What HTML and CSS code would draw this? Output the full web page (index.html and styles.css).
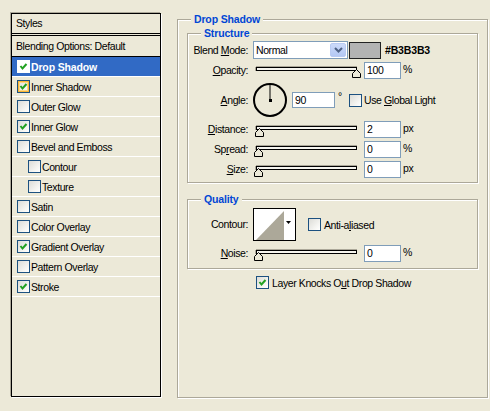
FILE: index.html
```html
<!DOCTYPE html>
<html>
<head>
<meta charset="utf-8">
<link rel="stylesheet" href="styles.css">
</head>
<body>
<div class="dialog">
  <div class="styles-list">
    <div class="list-head">Styles</div>
    <div class="list-body">
      <div class="row blend">Blending Options: Default</div>
      <div class="row sel"><span class="cb white"><svg viewBox="0 0 11 11" width="11" height="11"><polyline points="2.5,5 4.5,7.5 8.5,3" fill="none" stroke="#21A121" stroke-width="2"/></svg></span><b>Drop Shadow</b></div>
      <div class="row"><span class="cb hover"><svg viewBox="0 0 11 11" width="11" height="11"><polyline points="2.5,5 4.5,7.5 8.5,3" fill="none" stroke="#21A121" stroke-width="2"/></svg></span>Inner Shadow</div>
      <div class="row"><span class="cb"></span>Outer Glow</div>
      <div class="row"><span class="cb"><svg viewBox="0 0 11 11" width="11" height="11"><polyline points="2.5,5 4.5,7.5 8.5,3" fill="none" stroke="#21A121" stroke-width="2"/></svg></span>Inner Glow</div>
      <div class="row"><span class="cb"></span>Bevel and Emboss</div>
      <div class="row sub"><span class="cb"></span>Contour</div>
      <div class="row sub"><span class="cb"></span>Texture</div>
      <div class="row"><span class="cb"></span>Satin</div>
      <div class="row"><span class="cb"></span>Color Overlay</div>
      <div class="row"><span class="cb"><svg viewBox="0 0 11 11" width="11" height="11"><polyline points="2.5,5 4.5,7.5 8.5,3" fill="none" stroke="#21A121" stroke-width="2"/></svg></span>Gradient Overlay</div>
      <div class="row"><span class="cb"></span>Pattern Overlay</div>
      <div class="row"><span class="cb"><svg viewBox="0 0 11 11" width="11" height="11"><polyline points="2.5,5 4.5,7.5 8.5,3" fill="none" stroke="#21A121" stroke-width="2"/></svg></span>Stroke</div>
    </div>
  </div>

  <fieldset class="group outer">
    <legend class="legend-outer">Drop Shadow</legend>

    <fieldset class="group inner structure">
      <legend class="legend-inner">Structure</legend>
      <div class="form">
        <div class="label r18">Blend <u>M</u>ode:</div>
        <div class="ctrl r18">
          <div class="select"><span>Normal</span><span class="drop"><svg viewBox="0 0 9 6" width="9" height="6"><polyline points="1,1 4.5,4.5 8,1" fill="none" stroke="#4D6185" stroke-width="2"/></svg></span></div>
          <div class="swatch"></div>
          <b class="hex">#B3B3B3</b>
        </div>

        <div class="label"><u>O</u>pacity:</div>
        <div class="ctrl">
          <div class="slider"><div class="track"></div><svg class="thumb" style="left:99px" viewBox="0 0 10 9" width="10" height="9"><polygon points="0.5,8.5 0.5,4.5 4.5,0.5 8.5,4.5 8.5,8.5" fill="#ECE9D8" stroke="#000"/></svg></div>
          <div class="num">100</div><span class="unit">%</span>
        </div>

        <div class="label r36"><u>A</u>ngle:</div>
        <div class="ctrl r36">
          <svg class="dial" viewBox="0 0 34 36" width="34" height="36"><circle cx="17" cy="18" r="16" fill="none" stroke="#000" stroke-width="2"/><line x1="17" y1="18" x2="17" y2="2" stroke="#000" stroke-width="1"/><rect x="16" y="17" width="3" height="3" fill="#000"/></svg>
          <div class="num wide">90</div><span class="deg">°</span>
          <span class="cb"></span><span class="cb-label">Use <u>G</u>lobal Light</span>
        </div>

        <div class="label"><u>D</u>istance:</div>
        <div class="ctrl">
          <div class="slider"><div class="track"></div><svg class="thumb" style="left:2px" viewBox="0 0 10 9" width="10" height="9"><polygon points="0.5,8.5 0.5,4.5 4.5,0.5 8.5,4.5 8.5,8.5" fill="#ECE9D8" stroke="#000"/></svg></div>
          <div class="num">2</div><span class="unit">px</span>
        </div>

        <div class="label">Sp<u>r</u>ead:</div>
        <div class="ctrl">
          <div class="slider"><div class="track"></div><svg class="thumb" style="left:1px" viewBox="0 0 10 9" width="10" height="9"><polygon points="0.5,8.5 0.5,4.5 4.5,0.5 8.5,4.5 8.5,8.5" fill="#ECE9D8" stroke="#000"/></svg></div>
          <div class="num">0</div><span class="unit">%</span>
        </div>

        <div class="label"><u>S</u>ize:</div>
        <div class="ctrl">
          <div class="slider"><div class="track"></div><svg class="thumb" style="left:1px" viewBox="0 0 10 9" width="10" height="9"><polygon points="0.5,8.5 0.5,4.5 4.5,0.5 8.5,4.5 8.5,8.5" fill="#ECE9D8" stroke="#000"/></svg></div>
          <div class="num">0</div><span class="unit">px</span>
        </div>
      </div>
    </fieldset>

    <fieldset class="group inner quality">
      <legend class="legend-inner">Quality</legend>
      <div class="form">
        <div class="label r33">Contour:</div>
        <div class="ctrl r33">
          <svg class="contour" viewBox="0 0 43 33" width="43" height="33"><rect x="0.5" y="0.5" width="42" height="32" fill="#fff" stroke="#000"/><polygon points="3,32 31,3 31,32" fill="#ACA899"/><polygon points="33,13 38,13 35.5,16" fill="#000"/></svg>
          <span class="cb aa"></span><span class="cb-label">Anti-a<u>l</u>iased</span>
        </div>

        <div class="label"><u>N</u>oise:</div>
        <div class="ctrl">
          <div class="slider"><div class="track"></div><svg class="thumb" style="left:1px" viewBox="0 0 10 9" width="10" height="9"><polygon points="0.5,8.5 0.5,4.5 4.5,0.5 8.5,4.5 8.5,8.5" fill="#ECE9D8" stroke="#000"/></svg></div>
          <div class="num">0</div><span class="unit">%</span>
        </div>
      </div>
    </fieldset>

    <div class="knock">
      <span class="cb"><svg viewBox="0 0 11 11" width="11" height="11"><polyline points="2.5,5 4.5,7.5 8.5,3" fill="none" stroke="#21A121" stroke-width="2"/></svg></span>
      <span class="cb-label">Layer Knocks O<u>u</u>t Drop Shadow</span>
    </div>
  </fieldset>
</div>
</body>
</html>
```

FILE: styles.css
```css
* { box-sizing: border-box; }

body {
  margin: 0;
  background: #ECE9D8;
  font-family: "Liberation Sans", Arial, sans-serif;
  font-size: 10.5px;
  letter-spacing: -0.4px;
  color: #000;
}

b, legend { letter-spacing: -0.15px; }

.dialog {
  display: flex;
  align-items: flex-start;
  padding: 13px 0 0 11px;
  height: 411px;
}

/* ---------- left list ---------- */
.styles-list {
  width: 150px;
  height: 384px;
  border: 1px solid #000;
  box-shadow: -1px -1px 0 #ACA899, 1px 1px 0 #fff;
  flex: none;
}

.list-head {
  height: 20px;
  line-height: 19px;
  padding-left: 4px;
  border-bottom: 1px solid #000;
}

.list-body {
  margin-top: 1px;
  border-top: 1px solid #000;
}

.row {
  height: 20px;
  border-bottom: 1px solid #fff;
  display: flex;
  align-items: center;
  padding-left: 5px;
  white-space: nowrap;
}

.row.blend {
  height: 21px;
  padding-left: 4px;
  border-bottom-color: #000;
}

.row.sub { padding-left: 16px; }

.row.sel {
  background: #316AC5;
  color: #fff;
}

.row .cb { margin-right: 1px; }

/* ---------- checkbox ---------- */
.cb {
  width: 13px;
  height: 13px;
  flex: none;
  border: 1px solid #1C5180;
  background: linear-gradient(135deg, #DCDCD7 0%, #F6F6F3 70%, #fff 100%);
  display: flex;
  align-items: center;
  justify-content: center;
}

.cb svg { display: block; }

.cb.white {
  border-color: #fff;
  background: #fff;
}

.cb.hover {
  box-shadow: inset 0 0 0 1px #F8B636, inset 0 0 0 2px #FDD889;
}

.cb-label {
  margin-left: 2px;
  white-space: nowrap;
}

/* ---------- group boxes ---------- */
.group {
  margin: 0;
  border: 1px solid #ACA899;
  box-shadow: inset 1px 1px 0 #fff, 1px 1px 0 #fff;
  min-width: 0;
}

.group legend {
  font-weight: bold;
  color: #0046D5;
  line-height: 13px;
  padding: 0 3px;
  background: #ECE9D8;
}

.outer {
  margin-left: 16px;
  width: 311px;
  height: 385px;
  padding: 1px 9px 0 9px;
}

.legend-outer { margin-left: 4px; }

.inner { padding: 1px 0 4px 0; }

.legend-inner { margin-left: 13px; }

.quality {
  margin-top: 10px;
  padding: 2px 0 6px 0;
}

/* ---------- form grid ---------- */
.form {
  display: grid;
  grid-template-columns: 60px auto;
  column-gap: 5px;
  row-gap: 3px;
}

.label {
  height: 17px;
  line-height: 17px;
  text-align: right;
  white-space: nowrap;
}

.ctrl {
  height: 17px;
  display: flex;
  align-items: center;
}

.label.r18 { line-height: 18px; }
.label.r36 { line-height: 36px; }
.label.r33 { line-height: 33px; }

.r18 { height: 18px; }
.r36 { height: 36px; }
.r33 { height: 33px; margin-bottom: 1px; }

.select {
  width: 95px;
  height: 18px;
  border: 1px solid #7F9DB9;
  background: #fff;
  display: flex;
  align-items: center;
  justify-content: space-between;
  padding-left: 2px;
}

.drop {
  width: 16px;
  height: 14px;
  margin-right: 1px;
  border: 1px solid #B9CBF3;
  border-radius: 2px;
  background: linear-gradient(#CCDAFA, #B4C8F4);
  display: flex;
  align-items: center;
  justify-content: center;
}

.drop svg { display: block; }

.swatch {
  width: 32px;
  height: 17px;
  margin-left: 1px;
  border: 1px solid #222;
  background: #B3B3B3;
}

.hex { margin-left: 4px; }

.slider {
  width: 108px;
  height: 17px;
  position: relative;
  flex: none;
}

.track {
  margin: 5px 0 0 3px;
  width: 101px;
  height: 4px;
  border: 1px solid #000;
  background: #F5F4EE;
  box-shadow: 0 -1px 0 #ACA899, -1px 0 0 #ACA899;
}

.thumb {
  position: absolute;
  top: 7px;
  display: block;
}

.num {
  width: 37px;
  height: 17px;
  margin-left: 3px;
  border: 1px solid #7F9DB9;
  background: #fff;
  padding-left: 2px;
  line-height: 15px;
  flex: none;
}

.num.wide {
  width: 43px;
  height: 16px;
  margin-left: 5px;
  line-height: 14px;
}

.unit {
  margin-left: 2px;
  margin-top: -3px;
}

.dial { display: block; flex: none; }

.deg {
  width: 14px;
  padding-left: 3px;
  align-self: flex-start;
  margin-top: 8px;
}

.contour { display: block; flex: none; }

.cb.aa { margin-left: 12px; }
.aa + .cb-label { margin-left: 3px; }

.knock {
  display: flex;
  align-items: center;
  margin-top: 6px;
  padding-left: 69px;
  height: 15px;
}

.knock .cb-label { margin-left: 3px; }
```
